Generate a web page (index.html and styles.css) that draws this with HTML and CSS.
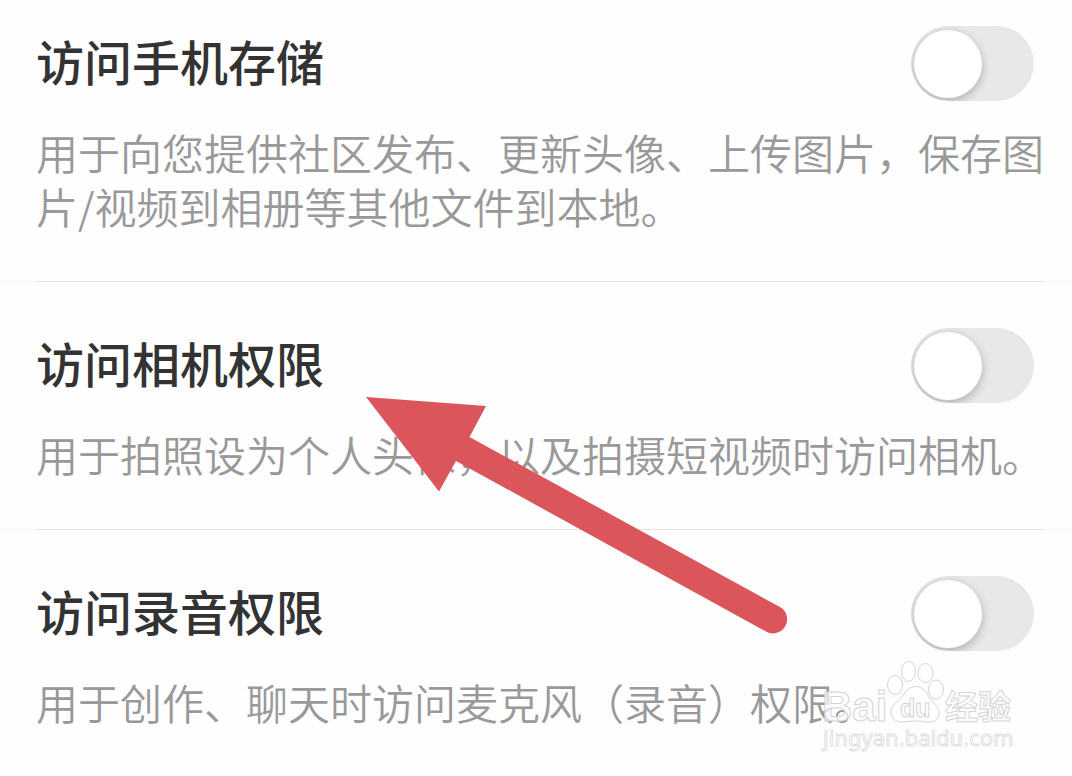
FILE: index.html
```html
<!DOCTYPE html>
<html lang="zh-CN">
<head>
<meta charset="utf-8">
<meta name="viewport" content="width=device-width, initial-scale=1">
<title>权限设置</title>
<link rel="stylesheet" href="styles.css">
</head>
<body>
<main class="permissions">
  <section class="item">
    <div class="item-head">
      <label class="item-title" for="storage">访问手机存储</label>
      <input class="switch" type="checkbox" role="switch" id="storage">
    </div>
    <p class="item-desc">用于向您提供社区发布、更新头像、上传图片，保存图片/视频到相册等其他文件到本地。</p>
  </section>
  <section class="item">
    <div class="item-head">
      <label class="item-title" for="camera">访问相机权限</label>
      <input class="switch" type="checkbox" role="switch" id="camera">
    </div>
    <p class="item-desc">用于拍照设为个人头像，以及拍摄短视频时访问相机。</p>
  </section>
  <section class="item">
    <div class="item-head">
      <label class="item-title" for="record">访问录音权限</label>
      <input class="switch" type="checkbox" role="switch" id="record">
    </div>
    <p class="item-desc">用于创作、聊天时访问麦克风（录音）权限。</p>
  </section>
  <svg class="arrow" width="424" height="240" viewBox="365 395 424 240" aria-hidden="true">
    <path d="M366 397L486 406L469.500 437L780 607A14 14 0 0 1 766 631.500L456 461L439 491.500Z"/>
  </svg>
  <svg class="watermark" width="200" height="100" viewBox="818 656 200 100" role="img" aria-label="Baidu 经验 jingyan.baidu.com">
    <g class="mark">
      <text class="mark-latin" x="822" y="721">Bai</text>
      <ellipse cx="895" cy="685" rx="7.500" ry="9.500"/>
      <ellipse cx="908.500" cy="671.500" rx="7" ry="10"/>
      <ellipse cx="925.500" cy="673" rx="7.500" ry="9.500"/>
      <ellipse cx="936" cy="689.500" rx="7.500" ry="9.500"/>
      <path d="M915.500 686.500C922 686.500 926 691 929 697C932 702 939 706 939 713C939 719 935 722 929 722C924 722 920 721 915.500 721C911 721 906 722 902 722C895 722 891 718 891 712C891 705 898 702 902 697C906 691 909 686.500 915.500 686.500Z"/>
      <text class="mark-du" x="900" y="717">du</text>
      <text class="mark-cjk" x="945" y="719">经验</text>
      <text class="mark-url" x="823" y="746">jingyan.baidu.com</text>
    </g>
  </svg>
</main>
</body>
</html>
```
FILE: styles.css
```css
body {
  margin: 0;
  background: #fefefe;
  font-family: "Noto Sans CJK SC", sans-serif;
}

.permissions {
  position: relative;
  overflow: hidden;
}

.item {
  padding: 46px 28px 48px 36px;
  border-bottom: 1px solid;
  border-image: linear-gradient(to right, #f6f6f6 36px, #e4e4e4 36px, #e4e4e4 calc(100% - 28px), #f6f6f6 calc(100% - 28px)) 1;
}

.item:first-child {
  padding-top: 26px;
}

.item:last-of-type {
  border-bottom: 0;
}

.item-head {
  display: flex;
  align-items: flex-start;
  justify-content: space-between;
  padding-right: 10px;
}

.item-title {
  color: #333;
  font-size: 48px;
  font-weight: 500;
  line-height: 68px;
}

.item-desc {
  margin: 24px 0 0;
  color: #999;
  font-size: 42px;
  font-weight: 350;
  line-height: 54px;
}

.switch {
  appearance: none;
  flex: none;
  box-sizing: border-box;
  width: 123px;
  height: 75px;
  margin: 0;
  padding: 4px 3px;
  overflow: hidden;
  border-radius: 38px;
  background: #e8e8e8;
}

.switch::before {
  content: "";
  display: block;
  width: 68px;
  height: 68px;
  border-radius: 50%;
  background: #fff;
  box-shadow: 0 3px 10px rgba(0, 0, 0, 0.25);
}

.switch:checked::before {
  margin-left: auto;
}

.arrow {
  position: absolute;
  top: 395px;
  left: 365px;
  fill: #db565b;
}

.watermark {
  position: absolute;
  top: 656px;
  right: 54px;
}

.mark {
  fill: #fff;
  fill-opacity: 0.7;
  stroke: #d4d4d4;
  stroke-width: 1px;
}

.mark-latin {
  font: 700 42px "Liberation Sans", sans-serif;
}

.mark-du {
  font: 700 25px "Liberation Sans", sans-serif;
}

.mark-cjk {
  font: 700 33px "Noto Sans CJK SC", sans-serif;
}

.mark-url {
  font: 400 22px "Noto Sans", sans-serif;
  stroke: #dedede;
}
```
